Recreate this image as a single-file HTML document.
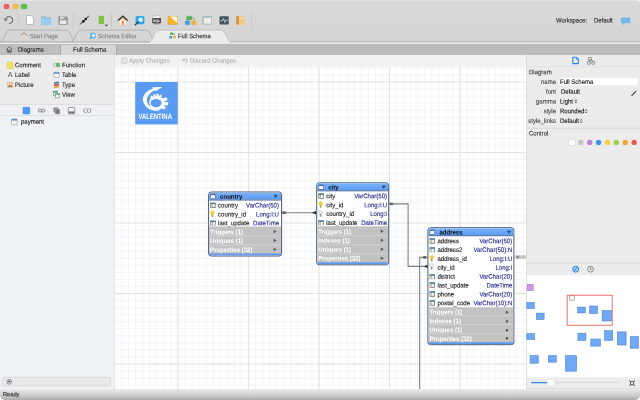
<!DOCTYPE html>
<html>
<head>
<meta charset="utf-8">
<title>Full Schema</title>
<style>
*{box-sizing:border-box;margin:0;padding:0}
html,body{width:640px;height:400px;overflow:hidden;background:#fff}
body{text-rendering:geometricPrecision;font-family:"Liberation Sans",sans-serif;font-size:6px;color:#222;line-height:1}
#win{will-change:transform;position:absolute;left:0;top:0;width:640px;height:400px;overflow:hidden;border-radius:3px 3px 5px 5px;background:#ececec}
.abs{position:absolute}
.t{position:absolute;top:0;white-space:nowrap;line-height:8px;height:8px;--m:1px;transform:translateY(calc(var(--y) + var(--m))) rotate(.03deg) scaleY(1.1);-webkit-text-stroke:.1px}
/* title + toolbar */
#titlebar{left:0;top:0;width:640px;height:43px;background:linear-gradient(#e6e6e6 0,#d9d9d9 1.5px,#d6d6d6 30px,#d5d5d5)}
.tl{position:absolute;top:3.5px;width:5.2px;height:5.2px;border-radius:50%}
.sep{position:absolute;top:12.5px;width:1px;height:15.5px;background:#cacaca}
/* sub tab bar */
#subbar{left:0;top:43px;width:640px;height:12px;background:linear-gradient(#ececec 0,#ececec 1.4px,#bbbbbb 1.5px)}
/* left panel */
#left{left:0;top:55px;width:114px;height:334px;background:#ececec}
#leftlist{left:0;top:115px;width:114px;height:274px}
#leftbg{left:0;top:104.6px;width:114px;height:284.4px;background:#eef1f5}
/* canvas */
#canvas{left:115px;top:67px;width:411px;height:322px;background:#fff;overflow:hidden}
#ctool{left:114.8px;top:54.5px;width:411.2px;height:11.9px;background:linear-gradient(#f1f1f1 0,#f1f1f1 11.2px,#e2e2e2 11.3px)}
/* right panel */
#right{left:526px;top:55px;width:114px;height:334px;background:#ececec}
/* status */
#status{left:0;top:389px;width:640px;height:11px;background:linear-gradient(#f2f2f2 0,#e4e4e4 1.2px,#d2d2d2 50%,#adadad)}
/* ER tables */
.tb{position:absolute;border:1px solid #465a7c;border-radius:3px;background:#fff;overflow:hidden}
.tb .hd{position:absolute;left:0;top:0;right:0;height:8.3px;background:linear-gradient(#7cb3f9,#5a9bf2);border-bottom:.7px solid #3f6196}
.tb .ft{position:absolute;left:0;right:0;bottom:0;height:4px;background:#5b9bf0}
.tb .sec{position:absolute;left:0;right:0;background:#c2c2c2}
.fn{position:absolute;white-space:nowrap;line-height:8px;height:8px;color:#111;font-size:6.05px;top:0;transform:translateY(calc(var(--y) + 1.4px)) rotate(.03deg) scaleY(1.1);-webkit-text-stroke:.1px}
.ty{position:absolute;white-space:nowrap;line-height:8px;height:8px;color:#1d1d8c;font-size:6.05px;text-align:right;top:0;transform:translateY(calc(var(--y) + 1.4px)) rotate(.03deg) scaleY(1.1);-webkit-text-stroke:.1px}
.sc{position:absolute;white-space:nowrap;line-height:8px;height:8px;color:#fff;font-weight:bold;font-size:6.05px;top:0;transform:translateY(calc(var(--y) + 1.6px)) rotate(.03deg) scaleY(1.1)}

.hn{position:absolute;white-space:nowrap;line-height:10px;height:10px;color:#0a0a0a;font-weight:bold;font-size:6.05px;top:0;transform:translateY(calc(var(--y) + .8px)) rotate(.03deg) scaleY(1.1)}
.sl{position:absolute;left:0;right:0;height:.6px;background:#d2d2d2}
.ic{position:absolute;width:5.5px;height:5.6px}
.ic.tbl{border:.5px solid #8c8c8c;background:linear-gradient(#4b7b98 0,#4b7b98 1.4px,rgba(0,0,0,0) 1.4px),linear-gradient(90deg,#d6cfae 0,#d6cfae 1.8px,#8c8c8c 1.8px,#8c8c8c 2.3px,#fff 2.3px)}
.ic.key::before,.ic.fk::before{content:"";position:absolute;left:.4px;top:-1.2px;width:2.9px;height:2.9px;border-radius:50%;background:#f6d23a;border:.5px solid #c9a21f}
.ic.key::after,.ic.fk::after{content:"";position:absolute;left:1.6px;top:2.5px;width:1.5px;height:2.9px;background:#b98f1d;border-radius:0 0 .6px .6px}
.ic.fk::before{background:#eef1f4;border-color:#8e98a4}
.ic.fk::after{background:#7f8b98}
#right .t{--m:1px}
</style>
</head>
<body>
<div id="win">

  <div id="titlebar" class="abs">
    <div class="tl" style="left:3.6px;background:#f4615a;box-shadow:0 0 0 .3px #e0483f"></div>
    <div class="tl" style="left:12.5px;background:#f6bd3f;box-shadow:0 0 0 .3px #dfa328"></div>
    <div class="tl" style="left:21.4px;background:#5dc544;box-shadow:0 0 0 .3px #45ab30"></div>
    <div class="sep" style="left:18px"></div>
    <div class="sep" style="left:73px"></div>
    <div class="sep" style="left:111px"></div>
    <div class="sep" style="left:251px"></div>
    <svg class="abs" style="left:0;top:0" width="640" height="43" viewBox="0 0 640 43">
      <!-- undo -->
      <path d="M5.6 19.2 A3.6 3.6 0 1 1 9.2 23.7" fill="none" stroke="#5a5a5a" stroke-width="1"/>
      <path d="M4 18.4 L5.6 20.9 L7.5 18.8" fill="none" stroke="#5a5a5a" stroke-width="1" stroke-linejoin="round"/>
      <!-- new doc -->
      <path d="M26.5 15.5 H31 L33.5 18 V24.5 H26.5 Z" fill="#fff" stroke="#b0b0b0" stroke-width=".8"/>
      <!-- folder -->
      <path d="M41.5 16.5 H45.3 L46.3 17.6 H50.7 V24.6 H41.5 Z" fill="#8fc6ea" stroke="#7db6dc" stroke-width=".5"/>
      <rect x="41.5" y="18.4" width="9.2" height="6.2" fill="#9ccdee"/>
      <!-- save -->
      <path d="M58.5 16.3 H66.3 L67.7 17.7 V24.7 H58.5 Z" fill="#8d8d8d"/>
      <rect x="60" y="16.3" width="5.4" height="3" fill="#d8d8d8"/>
      <rect x="63.6" y="16.8" width="1.1" height="2" fill="#8d8d8d"/>
      <rect x="59.7" y="20.3" width="6.8" height="3.8" fill="#e9e9e9"/>
      <!-- connect -->
      <path d="M79.9 24.5 L88.9 15.9" stroke="#2a2a2a" stroke-width="1" fill="none"/>
      <circle cx="83.3" cy="21.3" r="1.35" fill="#1c1c1c"/>
      <circle cx="85.7" cy="19.1" r="1.35" fill="#1c1c1c"/>
      <!-- green -->
      <rect x="99" y="16.1" width="4.7" height="7.7" fill="#82c83e" stroke="#6fb032" stroke-width=".5"/>
      <path d="M105 24.8 H107.8 L106.4 26.5 Z" fill="#222"/>
      <!-- home -->
      <path d="M119.3 20 H126.3 V24.8 H119.3 Z" fill="#fbf6ee" stroke="#c9b79a" stroke-width=".4"/>
      <rect x="121.8" y="21" width="2" height="3.8" fill="#ee8b2c"/>
      <path d="M118 20.6 L122.8 16.2 L127.6 20.6" fill="none" stroke="#4a2f1f" stroke-width="1.4" stroke-linejoin="miter"/>
      <!-- schema editor -->
      <rect x="135.6" y="16" width="8.8" height="8.2" rx="1.6" fill="#2ba4e6"/>
      <circle cx="140.6" cy="19.8" r="2.3" fill="#e9f4fb" stroke="#8fd0f3" stroke-width=".6"/>
      <path d="M138.6 22 L135.2 24.8" stroke="#2c3e50" stroke-width="1.3" stroke-linecap="round"/>
      <!-- sql -->
      <path d="M152.6 17 L154 15.7 H159 L160.6 17 V18.5 H152.6 Z" fill="#f4f4f4" stroke="#9a9a9a" stroke-width=".4"/>
      <rect x="152.2" y="18" width="8.8" height="5.2" rx=".8" fill="#4a4a4a"/>
      <text x="156.6" y="22.1" font-size="3.6" font-weight="bold" fill="#fff" text-anchor="middle" font-family="Liberation Sans, sans-serif">SQL</text>
      <path d="M153 23.2 H160.4 V24 Q156.6 24.8 153 24 Z" fill="#7a7a7a"/>
      <!-- ruler -->
      <rect x="168" y="16.3" width="9.6" height="8" fill="#f6b62c" stroke="#d99a1a" stroke-width=".5"/>
      <path d="M170.2 16.6 H177.3 V23 Z" fill="#fdf8ec"/>
      <!-- diagram -->
      <path d="M190 18 H194.2 V21" fill="none" stroke="#8a8a5a" stroke-width=".6"/>
      <path d="M188.2 19.5 V21.2" fill="none" stroke="#6a8a9a" stroke-width=".6"/>
      <rect x="186.6" y="16.2" width="5" height="3.6" rx=".5" fill="#55b760" stroke="#3f9a4b" stroke-width=".4"/>
      <rect x="185.3" y="21" width="4.2" height="3.6" rx=".5" fill="#3f9fe4" stroke="#2f86c8" stroke-width=".4"/>
      <rect x="191.6" y="21" width="4" height="3.6" rx=".5" fill="#f4b731" stroke="#d99c1d" stroke-width=".4"/>
      <!-- window -->
      <rect x="203" y="16.6" width="8.6" height="7.6" fill="#ededed" stroke="#a9bcc4" stroke-width=".9"/>
      <rect x="203" y="16.4" width="8.6" height="1.3" fill="#9fb6c2"/>
      <rect x="202.8" y="16.6" width="1.2" height="7.6" fill="#a6c4b4"/>
      <!-- monitor -->
      <rect x="219.5" y="16.3" width="9.2" height="8.1" rx=".6" fill="#46565e"/>
      <path d="M220.6 20.6 H222.6 L223.6 18.6 L224.8 22.4 L225.8 20.3 H227.8" fill="none" stroke="#e8f0f0" stroke-width=".7"/>
      <!-- book -->
      <rect x="236.2" y="16.2" width="8.2" height="8.3" rx=".6" fill="#f3c87a"/>
      <rect x="236.2" y="16.2" width="2.6" height="8.3" fill="#d08f45"/>
      <rect x="240.4" y="17.6" width="2.4" height="1.6" fill="#fbe9c4"/>
      <!-- chat -->
      <path d="M621.5 17.6 H629.8 Q630.4 17.6 630.4 18.2 V22.6 Q630.4 23.2 629.8 23.2 H625 L622.8 25.2 V23.2 H621.5 Q620.9 23.2 620.9 22.6 V18.2 Q620.9 17.6 621.5 17.6 Z" fill="#74b8e4"/>
      <!-- tabs -->
      <rect x="0" y="42.2" width="640" height="1" fill="#ececec"/>
      <rect x="0" y="41.5" width="640" height=".8" fill="#b2b2b2"/>
      <g stroke="#ababab" stroke-width=".8" fill="#d6d6d6">
        <path d="M0.5 41.9 C4 41.9 5 30.1 10 30.1 H66 C71 30.1 72 41.9 76 41.9 Z"/>
        <path d="M71 41.9 C75 41.9 76 30.1 81 30.1 H146 C151 30.1 152 41.9 156 41.9 Z"/>
      </g>
      <path d="M149 41.9 C153 41.9 154 30.1 159 30.1 H221 C226 30.1 227 41.9 231 41.9 L231 43 L149 43 Z" fill="#ececec" stroke="#b4b4b4" stroke-width=".7"/>
      <rect x="150" y="41.4" width="80.2" height="1.7" fill="#ececec"/>
      <!-- tab icons -->
      <g transform="translate(-98.2,21.7) scale(.68)" opacity=".8">
        <path d="M176.3 20 H183.3 V24.8 H176.3 Z" fill="#fbf6ee" stroke="#c9b79a" stroke-width=".5"/>
        <rect x="178.8" y="21.2" width="2" height="3.6" fill="#f1a65c"/>
        <path d="M175 20.6 L179.8 16.2 L184.6 20.6" fill="none" stroke="#8a7868" stroke-width="1.4"/>
      </g>
      <rect x="90" y="32.8" width="5.8" height="5.6" rx="1" fill="#6bbdea"/>
      <circle cx="93.3" cy="35.4" r="1.5" fill="#eaf5fb"/>
      <path d="M92 36.8 L89.8 38.8" stroke="#6a7a88" stroke-width=".9" stroke-linecap="round"/>
      <rect x="170" y="32.6" width="3.3" height="2.5" rx=".4" fill="#55b760"/>
      <rect x="169.2" y="36" width="2.9" height="2.6" rx=".4" fill="#3f9fe4"/>
      <rect x="173.2" y="36" width="2.7" height="2.6" rx=".4" fill="#f4b731"/>
      <path d="M173.3 33.8 H174.6 V36" fill="none" stroke="#8a8a5a" stroke-width=".5"/>
    </svg>
    <div class="t" style="left:29.6px;--y:32.2px;color:#808080;font-size:5.9px">Start Page</div>
    <div class="t" style="left:98.3px;--y:32.2px;color:#808080;font-size:5.9px">Schema Editor</div>
    <div class="t" style="left:178px;--y:32.2px;color:#2a2a2a;font-size:5.9px">Full Schema</div>
    <div class="t" style="left:556px;--y:16.5px;color:#222;font-size:5.9px">Workspace:</div>
    <div class="t" style="left:594px;--y:16.5px;color:#222;font-size:5.9px">Default</div>
  </div>

  <div id="subbar" class="abs">
    <div class="abs" style="left:0;top:1.5px;width:60.5px;height:10.5px;background:#bebebe;border-right:1px solid #a9a9a9"></div>
    <div class="abs" style="left:60.5px;top:1.5px;width:56.4px;height:10.5px;background:#d6d6d6;border-right:1px solid #a9a9a9"></div>
    <svg class="abs" style="left:0;top:1px" width="20" height="11" viewBox="0 0 20 11">
      <path d="M6.5 5.4 L9.3 2.7 L12.1 5.4 M7.4 4.9 V8.2 H11.2 V4.9 M8.7 8.2 V6.4 H9.9 V8.2" fill="none" stroke="#333" stroke-width=".65" stroke-linejoin="round"/>
    </svg>
    <div class="t" style="left:18px;--y:2.7px;color:#1c1c1c">Diagrams</div>
    <div class="t" style="left:72.6px;--y:2.7px;color:#1c1c1c">Full Schema</div>
  </div>

  <div id="leftbg" class="abs"></div>
  <div id="left" class="abs" style="background:none">
    <svg class="abs" style="left:0;top:0" width="114" height="62" viewBox="0 55 114 62">
      <!-- comment -->
      <path d="M7.2 62 H11.4 L13 63.6 V68.5 H7.2 Z" fill="#f6e35a" stroke="#d9c23a" stroke-width=".5"/>
      <path d="M11.4 62 V63.6 H13" fill="#fbf2a6" stroke="#d9c23a" stroke-width=".4"/>
      <!-- picture -->
      <rect x="7.2" y="82.4" width="5.8" height="5" fill="#f3dcb6" stroke="#b9a88c" stroke-width=".5"/>
      <path d="M7.8 86.8 L9.6 84.4 L11 85.8 L11.6 85.2 L12.5 86.8 Z" fill="#b5642e"/>
      <circle cx="11.4" cy="83.8" r=".6" fill="#f0a030"/>
      <!-- function -->
      <path d="M55.6 63.4 H54.6 Q53.6 63.4 53.6 64.3 V65.7 Q53.6 66.6 54.6 66.6 H55.6" fill="none" stroke="#8a8a8a" stroke-width=".55"/>
      <rect x="56.2" y="63.2" width="3.5" height="3.6" rx=".4" fill="#58b865" stroke="#3f9c4d" stroke-width=".4"/>
      <!-- table -->
      <rect x="53.9" y="72.2" width="5.3" height="5.2" rx=".5" fill="#fbfbfb" stroke="#8a98a8" stroke-width=".6"/>
      <rect x="53.9" y="72.2" width="5.3" height="1.6" fill="#5b8dc0"/>
      <!-- type -->
      <path d="M53.8 82.6 L58.6 81.6 L59.2 83.2 L54.2 84.2 Z" fill="#3f7fa8"/>
      <path d="M53.8 84.6 L58.8 83.8 L59.2 85.6 L54.2 86.4 Z" fill="#d4523f"/>
      <path d="M53.8 86.8 L58.8 86 L59.2 87.6 L54.2 88.3 Z" fill="#e3a33a"/>
      <!-- view -->
      <rect x="53.3" y="91.2" width="4.2" height="4.2" fill="#f4f4f4" stroke="#4a8a8a" stroke-width=".6"/>
      <rect x="53.3" y="91.2" width="4.2" height="1.2" fill="#3f7f86"/>
      <rect x="55.4" y="93.6" width="4.2" height="4.2" fill="#f4f4f4" stroke="#5aa06a" stroke-width=".6"/>
      <rect x="55.4" y="93.6" width="4.2" height="1.2" fill="#58a870"/>
      <!-- separators -->
      <rect x="0" y="104" width="114" height=".8" fill="#dcdcdc"/>
      <!-- icons row -->
      <rect x="23" y="107.2" width="6.8" height="6.8" rx=".6" fill="#4b97f2" stroke="#3a84de" stroke-width=".5"/>
      <g fill="none" stroke="#6e6e6e" stroke-width=".8">
        <rect x="38.4" y="109.2" width="3.2" height="2.8" rx="1.2"/>
        <rect x="41.6" y="109.2" width="3.2" height="2.8" rx="1.2"/>
      </g>
      <rect x="53.4" y="107.4" width="5" height="5.2" rx=".8" fill="#8a8a8a"/>
      <rect x="55" y="109" width="5" height="5.2" rx=".8" fill="#7a7a7a" stroke="#ececec" stroke-width=".4"/>
      <rect x="68.3" y="107.4" width="6.4" height="6.4" rx=".8" fill="#f4f4f4" stroke="#7c7c7c" stroke-width=".8"/>
      <rect x="68.6" y="111.4" width="5.8" height="2.2" fill="#7c7c7c"/>
      <g fill="none" stroke="#777" stroke-width=".7">
        <path d="M86.4 108.8 H85 Q83.6 108.8 83.6 110.6 Q83.6 112.4 85 112.4 H86.4"/>
        <rect x="87.4" y="108.8" width="3.2" height="3.6" rx="1"/>
      </g>
    </svg>
    <div class="t" style="left:7.7px;--y:16px;color:#555;font-size:6.6px">A</div>
    <div class="t" style="left:14.8px;--y:6.2px">Comment</div>
    <div class="t" style="left:14.8px;--y:16px">Label</div>
    <div class="t" style="left:14.8px;--y:25.8px">Picture</div>
    <div class="t" style="left:61.7px;--y:6.2px">Function</div>
    <div class="t" style="left:61.7px;--y:16px">Table</div>
    <div class="t" style="left:61.7px;--y:25.8px">Type</div>
    <div class="t" style="left:61.7px;--y:35.6px">View</div>
  </div>

  <div id="leftlist" class="abs">
    <div class="abs" style="left:0;top:0;width:114px;height:1px;background:#dde0e4"></div>
    <svg class="abs" style="left:0;top:0" width="114" height="274" viewBox="0 115 114 274">
      <rect x="11.5" y="119" width="5.6" height="5.8" rx=".6" fill="#fbfbfb" stroke="#8a96a2" stroke-width=".6"/>
      <rect x="11.5" y="119" width="5.6" height="1.6" fill="#6a8ab0"/>
      <rect x="2.6" y="377.3" width="108" height="8.6" rx="1.6" fill="#e9e9e9" stroke="#d2d2d2" stroke-width=".7"/>
      <circle cx="9.2" cy="381.8" r="2.4" fill="none" stroke="#4a4a4a" stroke-width=".55"/>
      <path d="M7.9 380.9 H10.5 L9.2 382.5 Z M9.2 382.3 V383.4" fill="#4a4a4a" stroke="#4a4a4a" stroke-width=".3"/>
    </svg>
    <div class="t" style="left:21px;--y:2.7px;color:#111">payment</div>
  </div>

  <div class="abs" style="left:113.6px;top:55px;width:1.2px;height:334px;background:#dcdcdc"></div>
  <div id="ctool" class="abs">
    <svg class="abs" style="left:.2px;top:.5px" width="130" height="12" viewBox="115 55 130 12">
      <rect x="121.8" y="58" width="5" height="5.2" rx=".6" fill="none" stroke="#b4b4b4" stroke-width=".6"/>
      <path d="M123.4 58 V63.2" stroke="#c4c4c4" stroke-width=".5"/>
      <path d="M183.4 60.2 A1.9 1.9 0 1 1 185.2 62.6" fill="none" stroke="#a4a4a4" stroke-width=".7"/>
      <path d="M182.6 59.4 L183.5 61 L185 59.9" fill="none" stroke="#a4a4a4" stroke-width=".7"/>
    </svg>
    <div class="t" style="left:14px;--y:1.7px;color:#b2b2b2">Apply Changes</div>
    <div class="t" style="left:74.8px;--y:1.7px;color:#b2b2b2">Discard Changes</div>
  </div>
  <div id="canvasarea" class="abs" style="left:0;top:0;width:526px;height:389px;overflow:hidden;clip-path:inset(66.4px 0 0 114.8px)">
<!--CANVAS_START-->
<svg class="abs" style="left:114px;top:66px" width="412" height="323" viewBox="114 66 412 323">
<rect x="114" y="66" width="412" height="323" fill="#fff"/>
<path d="M121.60 66 V389 M128.65 66 V389 M135.70 66 V389 M142.75 66 V389 M149.80 66 V389 M156.85 66 V389 M163.90 66 V389 M170.95 66 V389 M185.05 66 V389 M192.10 66 V389 M199.15 66 V389 M206.20 66 V389 M213.25 66 V389 M220.30 66 V389 M227.35 66 V389 M234.40 66 V389 M241.45 66 V389 M255.55 66 V389 M262.60 66 V389 M269.65 66 V389 M276.70 66 V389 M283.75 66 V389 M290.80 66 V389 M297.85 66 V389 M304.90 66 V389 M311.95 66 V389 M326.05 66 V389 M333.10 66 V389 M340.15 66 V389 M347.20 66 V389 M354.25 66 V389 M361.30 66 V389 M368.35 66 V389 M375.40 66 V389 M382.45 66 V389 M396.55 66 V389 M403.60 66 V389 M410.65 66 V389 M417.70 66 V389 M424.75 66 V389 M431.80 66 V389 M438.85 66 V389 M445.90 66 V389 M452.95 66 V389 M467.05 66 V389 M474.10 66 V389 M481.15 66 V389 M488.20 66 V389 M495.25 66 V389 M502.30 66 V389 M509.35 66 V389 M516.40 66 V389 M523.45 66 V389 M114 67.90 H526 M114 74.95 H526 M114 89.05 H526 M114 96.10 H526 M114 103.15 H526 M114 110.20 H526 M114 117.25 H526 M114 124.30 H526 M114 131.35 H526 M114 138.40 H526 M114 145.45 H526 M114 159.55 H526 M114 166.60 H526 M114 173.65 H526 M114 180.70 H526 M114 187.75 H526 M114 194.80 H526 M114 201.85 H526 M114 208.90 H526 M114 215.95 H526 M114 230.05 H526 M114 237.10 H526 M114 244.15 H526 M114 251.20 H526 M114 258.25 H526 M114 265.30 H526 M114 272.35 H526 M114 279.40 H526 M114 286.45 H526 M114 300.55 H526 M114 307.60 H526 M114 314.65 H526 M114 321.70 H526 M114 328.75 H526 M114 335.80 H526 M114 342.85 H526 M114 349.90 H526 M114 356.95 H526 M114 371.05 H526 M114 378.10 H526 M114 385.15 H526" stroke="#f1f1f1" stroke-width=".7" fill="none"/>
<path d="M178.00 66 V389 M248.50 66 V389 M319.00 66 V389 M389.50 66 V389 M460.00 66 V389 M114 82.00 H526 M114 152.50 H526 M114 223.00 H526 M114 293.50 H526 M114 364.00 H526" stroke="#e2e2e2" stroke-width="1.1" fill="none"/>
<!-- logo -->
<rect x="135.2" y="82" width="42.6" height="42.4" fill="#5a9cf4"/>
<g fill="#fff">
<ellipse cx="157" cy="103" rx="7.5" ry="6.9"/>
<g transform="translate(157,103)">
<rect x="-1.1" y="-9.1" width="2.2" height="3.4" transform="rotate(-42)"/>
<rect x="-1.1" y="-9.1" width="2.2" height="3.4" transform="rotate(-19)"/>
<rect x="-1.1" y="-9.1" width="2.2" height="3.4" transform="rotate(4)"/>
<rect x="-1.1" y="-9.1" width="2.2" height="3.4" transform="rotate(27)"/>
<rect x="-1.6" y="-11" width="3.2" height="5" transform="rotate(66)"/>
<rect x="-1.6" y="-11.2" width="3.2" height="5" transform="rotate(94)"/>
<rect x="-1.6" y="-9.6" width="3.2" height="4" transform="rotate(124)"/>
</g>
</g>
<ellipse cx="156" cy="103.1" rx="5.6" ry="4.2" fill="#5a9cf4"/>
<path d="M152.5 93 C148.2 96 147.2 101.5 149.3 105.5 C151 108.6 155 110.6 161.5 110.6" fill="none" stroke="#5a9cf4" stroke-width="1.1"/>
<path d="M162.4 87.1 L155.3 91.3 L154.5 90 C150.5 92.6 147 96 146.8 100 C146.6 104.5 150.5 108.3 160.6 110.3 C151 112.2 144 107.2 143 100.6 C142.3 95.2 146.8 90.6 152.8 88.5 L152.4 87.3 Z" fill="#fff"/>
<path d="M151.8 96.4 C149.6 99 149.6 103 151.4 105.8 C153.2 108 156 109.2 159.6 109.4 C154.5 109.2 151.3 107.6 150 105 C148.6 102 149.4 98.6 151.8 96.4 Z" fill="#fff"/>
<text x="138.5" y="119.1" font-family="Liberation Sans, sans-serif" font-weight="bold" font-size="7.6" fill="#fff" textLength="33.4" lengthAdjust="spacingAndGlyphs">VALENTINA</text>
<!-- connectors -->
<g fill="none" stroke="#7e7e7e" stroke-width="1.1">
<path d="M282 212.7 H316.3"/>
<path d="M389.3 203.9 H408.1 V266.4 H427.8"/>
<path d="M427.8 257.4 H419.65 V389"/>
</g>
<g fill="none" stroke="#7e7e7e" stroke-width="2.4">
<path d="M282 212.7 H286.2"/>
<path d="M389.3 203.9 H393.2"/>
<path d="M423.2 257.4 H426.2"/>
</g>
<path d="M515 255.9 H526 M515 257 H526 M515 258.1 H526" fill="none" stroke="#8c8c8c" stroke-width=".6"/>
<g fill="none" stroke="#444" stroke-width=".6">
<path d="M283.4 211.4 V214 M284.8 211.4 V214"/>
<path d="M390.6 202.6 V205.2 M392 202.6 V205.2"/>
<path d="M424 256.1 V258.7 M425.4 256.1 V258.7"/>
<path d="M517.2 255.7 V258.3 M518.6 255.7 V258.3"/>
</g>
<path d="M311.8 212.7 L316 210.9 V214.5 Z" fill="#2e2e2e"/>
<path d="M423.8 266.4 L427.8 264.6 V268.2 Z" fill="#2e2e2e"/>
</svg>
<div class="abs" style="left:0;top:0;width:640px;height:400px">
<div class="tb" style="left:0;top:0;transform:translate(208.1px,191.5px);width:73.8px;height:65px">
<div class="ft"></div>
<div class="hd"></div>
<svg class="abs" style="left:1px;top:1.4px" width="6" height="6" viewBox="0 0 6 6"><rect x=".4" y=".6" width="5" height="4.6" rx=".5" fill="#f4f7fb" stroke="#3d5f94" stroke-width=".65"/><rect x=".4" y=".6" width="5" height="1" fill="#3d5f94"/></svg>
<div class="hn" style="left:10.8px;--y:-.6px">country</div>
<svg class="abs" style="right:2.6px;top:2.4px" width="5" height="4" viewBox="0 0 5 4"><path d="M.3 .3 H4.7 L2.5 3.8 Z" fill="#2b4f86"/></svg>
<svg class="abs" style="left:1px;top:10.08px" width="5.5" height="5.5" viewBox="0 0 5.5 5.5"><rect x=".4" y=".4" width="4.7" height="4.7" fill="#fff" stroke="#6c6c6c" stroke-width=".8"/><rect x=".5" y="1.6" width="1.8" height="3.4" fill="#d6cfae"/><rect x="2.3" y="1.6" width=".5" height="3.4" fill="#8a8a8a"/><rect x="0" y="0" width="5.5" height="1.6" fill="#4b7b98"/></svg>
<div class="fn" style="left:8.7px;--y:8.54px">country</div>
<div class="ty" style="right:1.6px;--y:8.54px">VarChar(50)</div>
<svg class="abs" style="left:1px;top:17.71px" width="5.5" height="7" viewBox="0 0 5.5 7"><path d="M1.5 3.2 H3.1 V5.9 Q3.1 6.5 2.3 6.5 Q1.5 6.5 1.5 5.9 Z" fill="#c49a22"/><circle cx="2.3" cy="2.05" r="1.8" fill="#f6d23a" stroke="#cda522" stroke-width=".4"/></svg>
<div class="fn" style="left:8.7px;--y:17.41px">country_id</div>
<div class="ty" style="right:1.6px;--y:17.41px">Long:I:U</div>
<svg class="abs" style="left:1px;top:27.82px" width="5.5" height="5.5" viewBox="0 0 5.5 5.5"><rect x=".4" y=".4" width="4.7" height="4.7" fill="#fff" stroke="#6c6c6c" stroke-width=".8"/><rect x=".5" y="1.6" width="1.8" height="3.4" fill="#d6cfae"/><rect x="2.3" y="1.6" width=".5" height="3.4" fill="#8a8a8a"/><rect x="0" y="0" width="5.5" height="1.6" fill="#4b7b98"/></svg>
<div class="fn" style="left:8.7px;--y:26.27px">last_update</div>
<div class="ty" style="right:1.6px;--y:26.27px">DateTime</div>
<div class="sec" style="top:34.41px;height:26.61px"></div>
<div class="sc" style="left:1.2px;--y:35.04px">Triggers (1)</div>
<svg class="abs" style="right:4px;top:37.45px" width="4" height="4" viewBox="0 0 4 4"><path d="M.5 .3 L3.5 2 L.5 3.7 Z" fill="#585858"/></svg>
<div class="sl" style="top:42.98px"></div>
<div class="sc" style="left:1.2px;--y:43.91px">Uniques (1)</div>
<svg class="abs" style="right:4px;top:46.31px" width="4" height="4" viewBox="0 0 4 4"><path d="M.5 .3 L3.5 2 L.5 3.7 Z" fill="#585858"/></svg>
<div class="sl" style="top:51.85px"></div>
<div class="sc" style="left:1.2px;--y:52.78px">Properties (32)</div>
<svg class="abs" style="right:4px;top:55.18px" width="4" height="4" viewBox="0 0 4 4"><path d="M.5 .3 L3.5 2 L.5 3.7 Z" fill="#585858"/></svg>
</div>
<div class="tb" style="left:0;top:0;transform:translate(316.2px,182.3px);width:73.2px;height:83px">
<div class="ft"></div>
<div class="hd"></div>
<svg class="abs" style="left:1px;top:1.4px" width="6" height="6" viewBox="0 0 6 6"><rect x=".4" y=".6" width="5" height="4.6" rx=".5" fill="#f4f7fb" stroke="#3d5f94" stroke-width=".65"/><rect x=".4" y=".6" width="5" height="1" fill="#3d5f94"/></svg>
<div class="hn" style="left:10.8px;--y:-.6px">city</div>
<svg class="abs" style="right:2.6px;top:2.4px" width="5" height="4" viewBox="0 0 5 4"><path d="M.3 .3 H4.7 L2.5 3.8 Z" fill="#2b4f86"/></svg>
<svg class="abs" style="left:1px;top:10.08px" width="5.5" height="5.5" viewBox="0 0 5.5 5.5"><rect x=".4" y=".4" width="4.7" height="4.7" fill="#fff" stroke="#6c6c6c" stroke-width=".8"/><rect x=".5" y="1.6" width="1.8" height="3.4" fill="#d6cfae"/><rect x="2.3" y="1.6" width=".5" height="3.4" fill="#8a8a8a"/><rect x="0" y="0" width="5.5" height="1.6" fill="#4b7b98"/></svg>
<div class="fn" style="left:8.7px;--y:8.54px">city</div>
<div class="ty" style="right:1.6px;--y:8.54px">VarChar(50)</div>
<svg class="abs" style="left:1px;top:17.71px" width="5.5" height="7" viewBox="0 0 5.5 7"><path d="M1.5 3.2 H3.1 V5.9 Q3.1 6.5 2.3 6.5 Q1.5 6.5 1.5 5.9 Z" fill="#c49a22"/><circle cx="2.3" cy="2.05" r="1.8" fill="#f6d23a" stroke="#cda522" stroke-width=".4"/></svg>
<div class="fn" style="left:8.7px;--y:17.41px">city_id</div>
<div class="ty" style="right:1.6px;--y:17.41px">Long:I:U</div>
<svg class="abs" style="left:1px;top:26.57px" width="5.5" height="7" viewBox="0 0 5.5 7"><path d="M1.5 3.2 H3.1 V5.9 Q3.1 6.5 2.3 6.5 Q1.5 6.5 1.5 5.9 Z" fill="#8591a0"/><circle cx="2.3" cy="2.05" r="1.8" fill="#f0f3f6" stroke="#97a1ad" stroke-width=".45"/></svg>
<div class="fn" style="left:8.7px;--y:26.27px">country_id</div>
<div class="ty" style="right:1.6px;--y:26.27px">Long:I</div>
<svg class="abs" style="left:1px;top:36.70px" width="5.5" height="5.5" viewBox="0 0 5.5 5.5"><rect x=".4" y=".4" width="4.7" height="4.7" fill="#fff" stroke="#6c6c6c" stroke-width=".8"/><rect x=".5" y="1.6" width="1.8" height="3.4" fill="#d6cfae"/><rect x="2.3" y="1.6" width=".5" height="3.4" fill="#8a8a8a"/><rect x="0" y="0" width="5.5" height="1.6" fill="#4b7b98"/></svg>
<div class="fn" style="left:8.7px;--y:35.15px">last_update</div>
<div class="ty" style="right:1.6px;--y:35.15px">DateTime</div>
<div class="sec" style="top:43.28px;height:35.48px"></div>
<div class="sc" style="left:1.2px;--y:43.91px">Triggers (1)</div>
<svg class="abs" style="right:4px;top:46.32px" width="4" height="4" viewBox="0 0 4 4"><path d="M.5 .3 L3.5 2 L.5 3.7 Z" fill="#585858"/></svg>
<div class="sl" style="top:51.85px"></div>
<div class="sc" style="left:1.2px;--y:52.78px">Indexes (1)</div>
<svg class="abs" style="right:4px;top:55.19px" width="4" height="4" viewBox="0 0 4 4"><path d="M.5 .3 L3.5 2 L.5 3.7 Z" fill="#585858"/></svg>
<div class="sl" style="top:60.72px"></div>
<div class="sc" style="left:1.2px;--y:61.66px">Uniques (1)</div>
<svg class="abs" style="right:4px;top:64.06px" width="4" height="4" viewBox="0 0 4 4"><path d="M.5 .3 L3.5 2 L.5 3.7 Z" fill="#585858"/></svg>
<div class="sl" style="top:69.59px"></div>
<div class="sc" style="left:1.2px;--y:70.53px">Properties (32)</div>
<svg class="abs" style="right:4px;top:72.93px" width="4" height="4" viewBox="0 0 4 4"><path d="M.5 .3 L3.5 2 L.5 3.7 Z" fill="#585858"/></svg>
</div>
<div class="tb" style="left:0;top:0;transform:translate(427.4px,227.2px);width:87.3px;height:118px">
<div class="ft"></div>
<div class="hd"></div>
<svg class="abs" style="left:1px;top:1.4px" width="6" height="6" viewBox="0 0 6 6"><rect x=".4" y=".6" width="5" height="4.6" rx=".5" fill="#f4f7fb" stroke="#3d5f94" stroke-width=".65"/><rect x=".4" y=".6" width="5" height="1" fill="#3d5f94"/></svg>
<div class="hn" style="left:10.8px;--y:-.6px">address</div>
<svg class="abs" style="right:2.6px;top:2.4px" width="5" height="4" viewBox="0 0 5 4"><path d="M.3 .3 H4.7 L2.5 3.8 Z" fill="#2b4f86"/></svg>
<svg class="abs" style="left:1px;top:10.08px" width="5.5" height="5.5" viewBox="0 0 5.5 5.5"><rect x=".4" y=".4" width="4.7" height="4.7" fill="#fff" stroke="#6c6c6c" stroke-width=".8"/><rect x=".5" y="1.6" width="1.8" height="3.4" fill="#d6cfae"/><rect x="2.3" y="1.6" width=".5" height="3.4" fill="#8a8a8a"/><rect x="0" y="0" width="5.5" height="1.6" fill="#4b7b98"/></svg>
<div class="fn" style="left:8.7px;--y:8.54px">address</div>
<div class="ty" style="right:1.6px;--y:8.54px">VarChar(50)</div>
<svg class="abs" style="left:1px;top:18.96px" width="5.5" height="5.5" viewBox="0 0 5.5 5.5"><rect x=".4" y=".4" width="4.7" height="4.7" fill="#fff" stroke="#6c6c6c" stroke-width=".8"/><rect x=".5" y="1.6" width="1.8" height="3.4" fill="#d6cfae"/><rect x="2.3" y="1.6" width=".5" height="3.4" fill="#8a8a8a"/><rect x="0" y="0" width="5.5" height="1.6" fill="#4b7b98"/></svg>
<div class="fn" style="left:8.7px;--y:17.41px">address2</div>
<div class="ty" style="right:1.6px;--y:17.41px">VarChar(50):N</div>
<svg class="abs" style="left:1px;top:26.57px" width="5.5" height="7" viewBox="0 0 5.5 7"><path d="M1.5 3.2 H3.1 V5.9 Q3.1 6.5 2.3 6.5 Q1.5 6.5 1.5 5.9 Z" fill="#c49a22"/><circle cx="2.3" cy="2.05" r="1.8" fill="#f6d23a" stroke="#cda522" stroke-width=".4"/></svg>
<div class="fn" style="left:8.7px;--y:26.27px">address_id</div>
<div class="ty" style="right:1.6px;--y:26.27px">Long:I:U</div>
<svg class="abs" style="left:1px;top:35.45px" width="5.5" height="7" viewBox="0 0 5.5 7"><path d="M1.5 3.2 H3.1 V5.9 Q3.1 6.5 2.3 6.5 Q1.5 6.5 1.5 5.9 Z" fill="#8591a0"/><circle cx="2.3" cy="2.05" r="1.8" fill="#f0f3f6" stroke="#97a1ad" stroke-width=".45"/></svg>
<div class="fn" style="left:8.7px;--y:35.15px">city_id</div>
<div class="ty" style="right:1.6px;--y:35.15px">Long:I</div>
<svg class="abs" style="left:1px;top:45.57px" width="5.5" height="5.5" viewBox="0 0 5.5 5.5"><rect x=".4" y=".4" width="4.7" height="4.7" fill="#fff" stroke="#6c6c6c" stroke-width=".8"/><rect x=".5" y="1.6" width="1.8" height="3.4" fill="#d6cfae"/><rect x="2.3" y="1.6" width=".5" height="3.4" fill="#8a8a8a"/><rect x="0" y="0" width="5.5" height="1.6" fill="#4b7b98"/></svg>
<div class="fn" style="left:8.7px;--y:44.02px">district</div>
<div class="ty" style="right:1.6px;--y:44.02px">VarChar(20)</div>
<svg class="abs" style="left:1px;top:54.43px" width="5.5" height="5.5" viewBox="0 0 5.5 5.5"><rect x=".4" y=".4" width="4.7" height="4.7" fill="#fff" stroke="#6c6c6c" stroke-width=".8"/><rect x=".5" y="1.6" width="1.8" height="3.4" fill="#d6cfae"/><rect x="2.3" y="1.6" width=".5" height="3.4" fill="#8a8a8a"/><rect x="0" y="0" width="5.5" height="1.6" fill="#4b7b98"/></svg>
<div class="fn" style="left:8.7px;--y:52.88px">last_update</div>
<div class="ty" style="right:1.6px;--y:52.88px">DateTime</div>
<svg class="abs" style="left:1px;top:63.30px" width="5.5" height="5.5" viewBox="0 0 5.5 5.5"><rect x=".4" y=".4" width="4.7" height="4.7" fill="#fff" stroke="#6c6c6c" stroke-width=".8"/><rect x=".5" y="1.6" width="1.8" height="3.4" fill="#d6cfae"/><rect x="2.3" y="1.6" width=".5" height="3.4" fill="#8a8a8a"/><rect x="0" y="0" width="5.5" height="1.6" fill="#4b7b98"/></svg>
<div class="fn" style="left:8.7px;--y:61.75px">phone</div>
<div class="ty" style="right:1.6px;--y:61.75px">VarChar(20)</div>
<svg class="abs" style="left:1px;top:72.17px" width="5.5" height="5.5" viewBox="0 0 5.5 5.5"><rect x=".4" y=".4" width="4.7" height="4.7" fill="#fff" stroke="#6c6c6c" stroke-width=".8"/><rect x=".5" y="1.6" width="1.8" height="3.4" fill="#d6cfae"/><rect x="2.3" y="1.6" width=".5" height="3.4" fill="#8a8a8a"/><rect x="0" y="0" width="5.5" height="1.6" fill="#4b7b98"/></svg>
<div class="fn" style="left:8.7px;--y:70.62px">postal_code</div>
<div class="ty" style="right:1.6px;--y:70.62px">VarChar(10):N</div>
<div class="sec" style="top:78.76px;height:35.48px"></div>
<div class="sc" style="left:1.2px;--y:79.39px">Triggers (1)</div>
<svg class="abs" style="right:4px;top:81.80px" width="4" height="4" viewBox="0 0 4 4"><path d="M.5 .3 L3.5 2 L.5 3.7 Z" fill="#585858"/></svg>
<div class="sl" style="top:87.33px"></div>
<div class="sc" style="left:1.2px;--y:88.27px">Indexes (1)</div>
<svg class="abs" style="right:4px;top:90.67px" width="4" height="4" viewBox="0 0 4 4"><path d="M.5 .3 L3.5 2 L.5 3.7 Z" fill="#585858"/></svg>
<div class="sl" style="top:96.20px"></div>
<div class="sc" style="left:1.2px;--y:97.13px">Uniques (1)</div>
<svg class="abs" style="right:4px;top:99.53px" width="4" height="4" viewBox="0 0 4 4"><path d="M.5 .3 L3.5 2 L.5 3.7 Z" fill="#585858"/></svg>
<div class="sl" style="top:105.07px"></div>
<div class="sc" style="left:1.2px;--y:106.00px">Properties (32)</div>
<svg class="abs" style="right:4px;top:108.41px" width="4" height="4" viewBox="0 0 4 4"><path d="M.5 .3 L3.5 2 L.5 3.7 Z" fill="#585858"/></svg>
</div>
</div>
<!--CANVAS_END-->
  </div>

  <div id="right" class="abs">
    <svg class="abs" style="left:0;top:0" width="114" height="334" viewBox="526 55 114 334">
      <rect x="526" y="66.2" width="114" height=".7" fill="#dedede"/>
      <rect x="525.6" y="55" width="1" height="334" fill="#d2d2d2"/>
      <!-- doc icon (active) -->
      <path d="M572.8 57.3 H576.4 L578.3 59.2 V63.6 H572.8 Z" fill="#e4effd" stroke="#2a7fe8" stroke-width="1.1" stroke-linejoin="round"/>
      <path d="M576.2 57.3 V59.4 H578.3" fill="none" stroke="#2a7fe8" stroke-width=".7"/>
      <!-- diagram icon -->
      <g fill="none" stroke="#5a5a5a" stroke-width=".6">
        <rect x="588.4" y="57.5" width="3.2" height="2.3" rx=".4"/>
        <rect x="587.4" y="61.6" width="2.8" height="2.6" rx=".4"/>
        <rect x="591.8" y="61.6" width="2.8" height="2.6" rx=".4"/>
        <path d="M590 59.8 V60.8 H589 V61.6 M590 60.8 H593 V61.6"/>
      </g>
      <!-- name input -->
      <rect x="559.4" y="78" width="78" height="7.4" fill="#fff"/>
      <!-- pencil -->
      <path d="M631.6 94.9 L635.7 90.8 L636.5 91.6 L632.4 95.7 L631.2 96.1 Z" fill="#3a3a3a"/>
      <!-- steppers -->
      <g fill="none" stroke="#151515" stroke-width=".7" stroke-linejoin="round">
        <path d="M574.8 100.95 L575.8 99.75 L576.8 100.95 M574.8 101.85 L575.8 103.05 L576.8 101.85"/>
        <path d="M585.0 110.75 L586.0 109.55 L587.0 110.75 M585.0 111.65 L586.0 112.85 L587.0 111.65"/>
        <path d="M580.2 120.55 L581.2 119.35 L582.2 120.55 M580.2 121.45 L581.2 122.65 L582.2 121.45"/>
      </g>
      <rect x="526" y="127.8" width="114" height=".7" fill="#cfcfcf"/>
      <circle cx="572" cy="142.4" r="3.6" fill="#fff" stroke="#d0d0d0" stroke-width=".7"/>
<circle cx="580.8" cy="142.4" r="2.7" fill="#c6c6c6"/>
<circle cx="589.7" cy="142.4" r="2.7" fill="#b982dc"/>
<circle cx="598.6" cy="142.4" r="2.7" fill="#4a90f2"/>
<circle cx="607.5" cy="142.4" r="2.7" fill="#f2d13c"/>
<circle cx="616.4" cy="142.4" r="2.7" fill="#9fce3e"/>
<circle cx="625.3" cy="142.4" r="2.7" fill="#f4a43c"/>
<circle cx="634.2" cy="142.4" r="2.7" fill="#f25a48"/>

      <rect x="526" y="262.8" width="114" height=".7" fill="#d6d6d6"/>
      <!-- minimap icons -->
      <circle cx="575.7" cy="269.2" r="3" fill="#a6d4fb" stroke="#2f7fdc" stroke-width="1"/>
      <path d="M574.2 270.9 L577.2 267.5" stroke="#2f7fdc" stroke-width="1"/>
      <circle cx="590.5" cy="269.2" r="2.9" fill="none" stroke="#5a5a5a" stroke-width=".7"/>
      <path d="M590.5 267.4 V269.3 H592" fill="none" stroke="#5a5a5a" stroke-width=".6"/>
      <!-- minimap -->
      <rect x="527" y="275.3" width="113" height="102.3" fill="#fff"/>
      <rect x="527.3" y="284.3" width="5.9" height="6.4" fill="#cf9be0" stroke="#a878bc" stroke-width=".6"/>
<rect x="526.8" y="302.3" width="7.5" height="6.1" fill="#6ea8f6" stroke="#4f84cc" stroke-width=".6"/>
<rect x="536.3" y="313.1" width="7.8" height="6.4" fill="#6ea8f6" stroke="#4f84cc" stroke-width=".6"/>
<rect x="577.5" y="307.1" width="8.0" height="5.8" fill="#6ea8f6" stroke="#4f84cc" stroke-width=".6"/>
<rect x="589.5" y="306.0" width="8.0" height="7.5" fill="#6ea8f6" stroke="#4f84cc" stroke-width=".6"/>
<rect x="602.1" y="310.5" width="9.3" height="10.5" fill="#6ea8f6" stroke="#4f84cc" stroke-width=".6"/>
<rect x="526.8" y="333.7" width="7.9" height="5.6" fill="#6ea8f6" stroke="#4f84cc" stroke-width=".6"/>
<rect x="577.9" y="333.2" width="8.0" height="7.1" fill="#6ea8f6" stroke="#4f84cc" stroke-width=".6"/>
<rect x="590.8" y="339.0" width="9.6" height="7.1" fill="#6ea8f6" stroke="#4f84cc" stroke-width=".6"/>
<rect x="604.5" y="330.6" width="8.1" height="9.7" fill="#6ea8f6" stroke="#4f84cc" stroke-width=".6"/>
<rect x="617.3" y="331.9" width="8.8" height="13.1" fill="#6ea8f6" stroke="#4f84cc" stroke-width=".6"/>
<rect x="630.3" y="336.6" width="8.1" height="11.6" fill="#6ea8f6" stroke="#4f84cc" stroke-width=".6"/>
<rect x="530.1" y="355.7" width="8.2" height="7.5" fill="#6ea8f6" stroke="#4f84cc" stroke-width=".6"/>
<rect x="548.4" y="355.7" width="7.9" height="6.5" fill="#6ea8f6" stroke="#4f84cc" stroke-width=".6"/>
<rect x="565.5" y="355.7" width="11.0" height="15.5" fill="#6ea8f6" stroke="#4f84cc" stroke-width=".6"/>

      <rect x="569.4" y="295.8" width="5" height="4.4" fill="#f6f6f6" stroke="#8a8a8a" stroke-width=".6"/>
      <rect x="567.2" y="295.2" width="45" height="30" fill="none" stroke="#f0625a" stroke-width=".9"/>
      <!-- slider -->
      <rect x="527" y="377.6" width="113" height="11.4" fill="#ececec"/>
      <rect x="526" y="388.5" width="114" height=".6" fill="#cdcdcd"/>
      <rect x="531" y="382" width="88" height="1.1" rx=".5" fill="#d9d9d9"/>
      <rect x="531" y="381.9" width="19" height="1.3" rx=".6" fill="#2f86ee"/>
      <circle cx="551" cy="382.8" r="3.8" fill="#fff" stroke="#d8d8d8" stroke-width=".5"/>
      <g fill="none" stroke="#505050" stroke-width=".9">
        <rect x="630.5" y="381.6" width="3.2" height="3.2"/>
        <path d="M629.2 380.3 L630.5 381.6 M635 380.3 L633.7 381.6 M629.2 386.1 L630.5 384.8 M635 386.1 L633.7 384.8"/>
      </g>
    </svg>
    <div class="t" style="left:2.5px;--y:13.2px;color:#333">Diagram</div>
    <div class="t" style="left:0;width:30px;text-align:right;--y:23px;color:#444">name</div>
    <div class="t" style="left:0;width:30px;text-align:right;--y:32.6px;color:#444">font</div>
    <div class="t" style="left:0;width:30px;text-align:right;--y:42.3px;color:#444">gamma</div>
    <div class="t" style="left:0;width:30px;text-align:right;--y:52.1px;color:#444">style</div>
    <div class="t" style="left:0;width:30px;text-align:right;--y:61.9px;color:#444">style_links</div>
    <div class="t" style="left:34.2px;--y:23px;color:#111">Full Schema</div>
    <div class="t" style="left:35px;--y:32.6px;color:#111">Default</div>
    <div class="t" style="left:33.5px;--y:42.3px;color:#111">Light</div>
    <div class="t" style="left:33.5px;--y:52.1px;color:#111">Rounded</div>
    <div class="t" style="left:33.5px;--y:61.9px;color:#111">Default</div>
    <div class="t" style="left:2.5px;--y:74.4px;color:#333">Control</div>
  </div>

  <div id="status" class="abs">
    <div class="t" style="left:2.8px;--y:1.2px;color:#222;font-size:5.7px">Ready</div>
  </div>
</div>
</body>
</html>
